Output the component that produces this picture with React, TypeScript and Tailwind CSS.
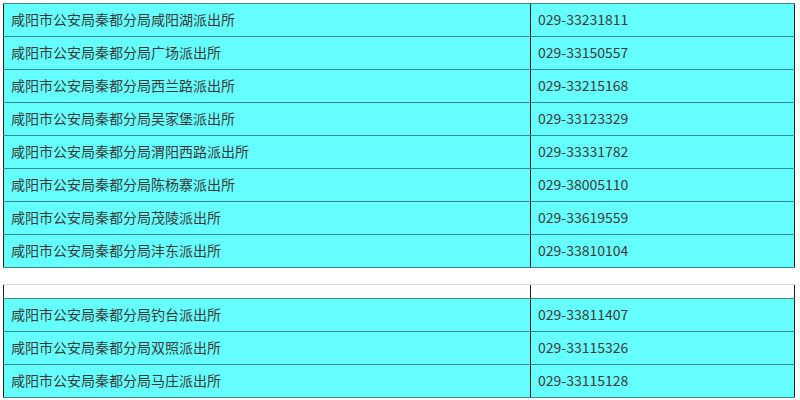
type Station = {
  name: string
  phone: string
}

const firstGroup: Station[] = [
  { name: "咸阳市公安局秦都分局咸阳湖派出所", phone: "029-33231811" },
  { name: "咸阳市公安局秦都分局广场派出所", phone: "029-33150557" },
  { name: "咸阳市公安局秦都分局西兰路派出所", phone: "029-33215168" },
  { name: "咸阳市公安局秦都分局吴家堡派出所", phone: "029-33123329" },
  { name: "咸阳市公安局秦都分局渭阳西路派出所", phone: "029-33331782" },
  { name: "咸阳市公安局秦都分局陈杨寨派出所", phone: "029-38005110" },
  { name: "咸阳市公安局秦都分局茂陵派出所", phone: "029-33619559" },
  { name: "咸阳市公安局秦都分局沣东派出所", phone: "029-33810104" },
]

const secondGroup: Station[] = [
  { name: "咸阳市公安局秦都分局钓台派出所", phone: "029-33811407" },
  { name: "咸阳市公安局秦都分局双照派出所", phone: "029-33115326" },
  { name: "咸阳市公安局秦都分局马庄派出所", phone: "029-33115128" },
]

function Row({ item }: { item: Station }) {
  return (
    <div className="flex h-[33px] border-t border-[#3a8a8a] bg-[#66ffff]">
      <div className="flex w-[528px] items-center border-x border-[#1f1f1f] pb-[2px] pl-[7px]">
        {item.name}
      </div>
      <div className="flex flex-1 items-center border-r border-[#1f1f1f] pb-[2px] pl-[7px]">
        {item.phone}
      </div>
    </div>
  )
}

export default function App() {
  return (
    <div
      className="h-[400px] w-[800px] overflow-hidden bg-white pl-[3px] pt-[3px] text-[14px] text-[#3a3a3a]"
      style={{ fontFamily: '"Noto Sans CJK SC", "Noto Sans", sans-serif' }}
    >
      <div className="w-[792px]">
        <div className="border-b border-[#3a8a8a]">
          {firstGroup.map((item) => (
            <Row key={item.name} item={item} />
          ))}
        </div>

        <div className="mt-[16px] flex h-[14px] border-t border-[#dcdcdc]">
          <div className="w-[528px] border-x border-[#1f1f1f]" />
          <div className="flex-1 border-r border-[#1f1f1f]" />
        </div>

        <div className="border-b border-[#3a8a8a]">
          {secondGroup.map((item) => (
            <Row key={item.name} item={item} />
          ))}
        </div>
      </div>
    </div>
  )
}
